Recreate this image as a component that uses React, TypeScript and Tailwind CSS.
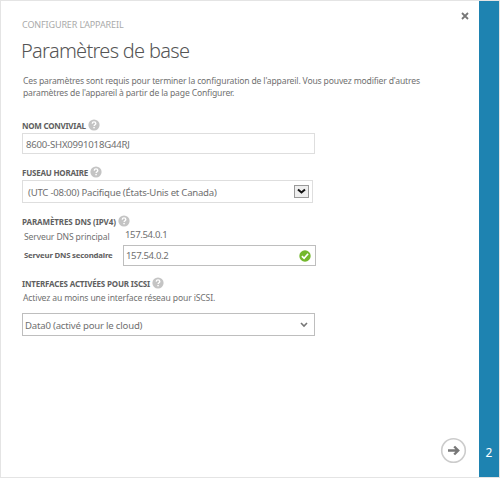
import React from "react";

function Help() {
  return (
    <svg width="12" height="12" viewBox="0 0 12 12" className="shrink-0" role="img">
      <circle cx="6" cy="6" r="5.6" fill="#c4c4c4" />
      <path d="M4.2 4.6C4.3 3.4 5 2.9 6 2.9c1.1 0 1.8.6 1.8 1.5 0 1.3-1.7 1.3-1.7 2.7" fill="none" stroke="#fff" strokeWidth="1.4" />
      <rect x="5.3" y="7.9" width="1.5" height="1.4" fill="#fff" />
    </svg>
  );
}

function Label({ text, className }: { text: string; className: string }) {
  return (
    <div className="flex h-3 items-center gap-[2px]">
      <span className={"shrink-0 pt-px text-[8px] font-bold leading-3 text-[#606060] " + className}>{text}</span>
      <Help />
    </div>
  );
}

export default function App() {
  return (
    <div className="flex h-[478px] w-[500px] overflow-hidden whitespace-nowrap border border-[#e4e4e4] bg-white font-['Noto_Sans','Open_Sans',sans-serif] text-[#707070]">
      <main className="flex w-[478px] shrink-0 flex-col pl-[21px]">
        <header className="flex h-[38px] justify-between pr-[10px]">
          <span className="mt-[18px] text-[9px] leading-3 tracking-[-0.12px] text-[#aaa]">CONFIGURER L’APPAREIL</span>
          <button className="mt-[11px] h-2 w-2" aria-label="Fermer">
            <svg width="8" height="8" viewBox="0 0 8 8">
              <path d="M1 1l6 6M7 1L1 7" stroke="#777" strokeWidth="1.8" />
            </svg>
          </button>
        </header>
        <h1 className="-ml-px h-[26px] text-[20px] font-light leading-[24px] tracking-[-0.7px] text-[#555]">Paramètres de base</h1>
        <p className="mt-[10px] pl-px text-[8.6px] leading-3 tracking-[-0.165px]">
          <span className="block">Ces paramètres sont requis pour terminer la configuration de l'appareil. Vous pouvez modifier d'autres</span>
          <span className="block">paramètres de l'appareil à partir de la page Configurer.</span>
        </p>

        <div className="mt-[20px]"><Label text="NOM CONVIVIAL" className="tracking-[-0.25px]" /></div>
        <div className="mt-[2px] flex h-[21px] w-[293px] items-center border border-[#dedede] pl-[3px] text-[9.6px]">
          <span className="pt-[3px] leading-[14px] tracking-[-0.22px]">8600-SHX0991018G44RJ</span>
        </div>

        <div className="mt-[12px]"><Label text="FUSEAU HORAIRE" className="tracking-[-0.22px]" /></div>
        <div className="mt-[2px] flex h-[23px] w-[291px] items-center justify-between border border-[#dedede] pl-[5px] pr-[3px] text-[9.6px]">
          <span className="pt-[3px] leading-[14px] tracking-[-0.24px]">(UTC -08:00) Pacifique (États-Unis et Canada)</span>
          <span className="flex h-[13px] w-[15px] items-center justify-center border border-[#999] bg-[#eee]">
            <svg width="9" height="7" viewBox="0 0 9 7">
              <path d="M1 1.5l3.5 3L8 1.5" fill="none" stroke="#111" strokeWidth="2" />
            </svg>
          </span>
        </div>

        <div className="mt-[12px]"><Label text="PARAMÈTRES DNS (IPV4)" className="tracking-[-0.1px]" /></div>
        <div className="flex h-[18px]">
          <span className="w-[103px] pl-[2px] text-[8.6px] leading-[20px] tracking-[-0.13px]">Serveur DNS principal</span>
          <span className="text-[9.6px] leading-[16px] tracking-[-0.38px]">157.54.0.1</span>
        </div>
        <div className="flex h-[22px]">
          <span className="w-[101px] pl-[2px] text-[7.8px] font-bold leading-[21px] tracking-[-0.2px] text-[#606060]">Serveur DNS secondaire</span>
          <div className="flex h-[21px] w-[193px] items-center justify-between border border-[#bebebe] pl-[2px] pr-[4px] text-[9.6px]">
            <span className="leading-[17px] tracking-[-0.38px]">157.54.0.2</span>
            <svg width="12" height="12" viewBox="0 0 12 12">
              <circle cx="6" cy="6" r="5.7" fill="#73b82c" />
              <path d="M2.9 6.1l2.2 2.2 4-4.5" fill="none" stroke="#fff" strokeWidth="1.7" />
            </svg>
          </div>
        </div>

        <div className="mt-[10px]"><Label text="INTERFACES ACTIVÉES POUR ISCSI" className="tracking-[-0.18px]" /></div>
        <p className="mt-[2px] pl-px text-[8.6px] leading-[14px] tracking-[-0.14px]">Activez au moins une interface réseau pour iSCSI.</p>
        <div className="mt-[8px] flex h-[23px] w-[293px] items-center justify-between border border-[#bebebe] pl-[2px] pr-[6px] text-[9.6px]">
          <span className="pt-[3px] leading-[14px] tracking-[-0.2px]">Data0 (activé pour le cloud)</span>
          <svg width="8" height="6" viewBox="0 0 8 6">
            <path d="M1 1l3 3 3-3" fill="none" stroke="#777" strokeWidth="1.6" />
          </svg>
        </div>

        <button className="mb-[13px] mr-[12px] mt-auto h-[27px] w-[27px] self-end" aria-label="Suivant">
          <svg width="27" height="27" viewBox="0 0 27 27">
            <circle cx="13.5" cy="13.5" r="11.8" fill="none" stroke="#ccc" strokeWidth="1.6" />
            <path d="M8 13.5h10M14.2 9.5l4 4-4 4" fill="none" stroke="#777" strokeWidth="2.4" />
          </svg>
        </button>
      </main>
      <aside className="flex w-5 shrink-0 items-end justify-center bg-[#1e83b1] pb-[15px] text-[12px] leading-[18px] text-white">2</aside>
    </div>
  );
}
